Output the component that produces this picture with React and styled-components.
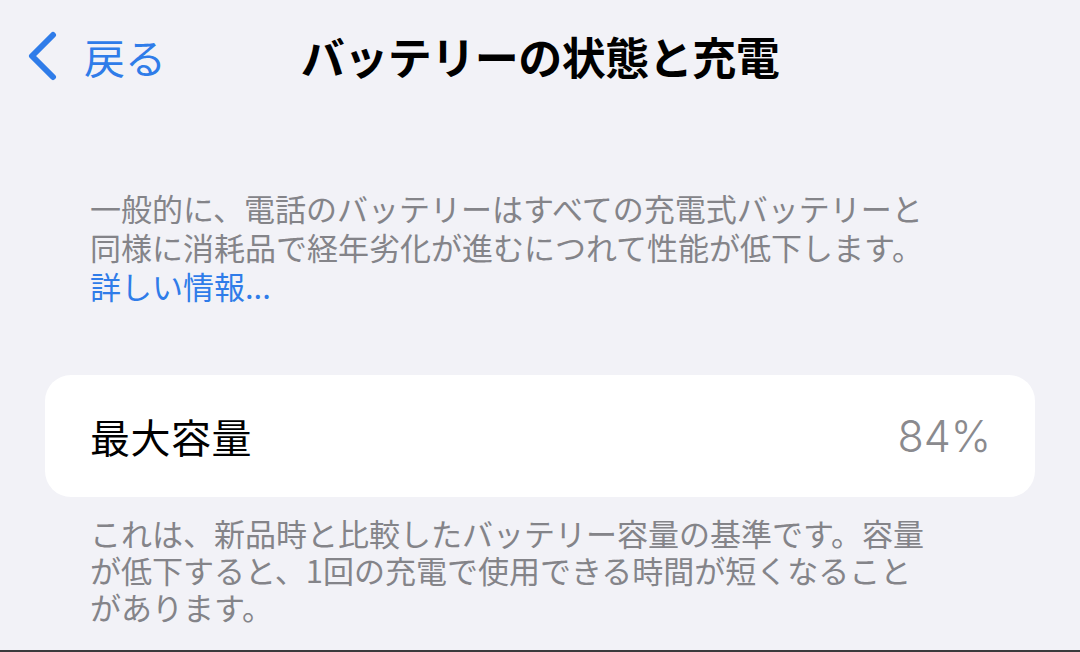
import React from "react";
import styled, { createGlobalStyle } from "styled-components";

const Global = createGlobalStyle`
  html, body { margin: 0; padding: 0; background: #f2f2f7; }
  body { font-family: "Noto Sans CJK JP", "Noto Sans", sans-serif; }
`;

const Screen = styled.div`
  width: 1080px;
  height: 652px;
  box-sizing: border-box;
  background: #f2f2f7;
  border-bottom: 2px solid #3a3a3c;
  overflow: hidden;
  display: flex;
  flex-direction: column;
`;

const NavBar = styled.div`
  height: 112px;
  display: grid;
  grid-template-columns: 1fr auto 1fr;
  align-items: center;
`;

const BackButton = styled.div`
  display: flex;
  align-items: center;
  gap: 26px;
  padding-left: 26px;
  color: #2f7ce9;
  font-size: 41px;
  line-height: 1;
`;

const Title = styled.div`
  font-size: 44px;
  font-weight: 700;
  color: #000;
  letter-spacing: -0.5px;
  line-height: 1;
`;

const Footer = styled.p`
  margin: 0;
  padding: ${(p) => p.$pad};
  font-size: 31px;
  line-height: ${(p) => p.$lh}px;
  color: #848489;
  letter-spacing: ${(p) => p.$ls}px;
`;

const Link = styled.span`
  color: #2f7ce9;
`;

const Card = styled.div`
  margin: ${(p) => p.$top}px 45px 0;
  height: 122px;
  background: #fff;
  border-radius: 26px;
  display: flex;
  align-items: center;
  justify-content: space-between;
  padding: 0 44px 0 45px;
  box-sizing: border-box;
`;

const Label = styled.span`
  font-size: 40px;
  color: #000;
  letter-spacing: 0.5px;
`;

const Value = styled.span`
  font-family: "Inter", "Liberation Sans", sans-serif;
  font-size: 43px;
  font-weight: 300;
  color: #8a8a8e;
`;

const Chevron = () => (
  <svg width="32" height="50" viewBox="0 0 32 50" fill="none">
    <path d="M27 4 L6 25 L27 46" stroke="#2f7ce9" strokeWidth="6" strokeLinecap="round" strokeLinejoin="round" />
  </svg>
);

export default function App() {
  return (
    <>
      <Global />
      <Screen>
        <NavBar>
          <BackButton>
            <Chevron />
            <span>戻る</span>
          </BackButton>
          <Title>バッテリーの状態と充電</Title>
          <div />
        </NavBar>
        <Footer $pad="76px 90px 0" $lh={39} $ls={0}>
          一般的に、電話のバッテリーはすべての充電式バッテリーと
          <br />
          同様に消耗品で経年劣化が進むにつれて性能が低下します。
          <br />
          <Link>詳しい情報...</Link>
        </Footer>
        <Card $top={70}>
          <Label>最大容量</Label>
          <Value>84%</Value>
        </Card>
        <Footer $pad="17px 90px 0" $lh={37} $ls={0}>
          これは、新品時と比較したバッテリー容量の基準です。容量
          <br />
          が低下すると、1回の充電で使用できる時間が短くなること
          <br />
          があります。
        </Footer>
      </Screen>
    </>
  );
}
